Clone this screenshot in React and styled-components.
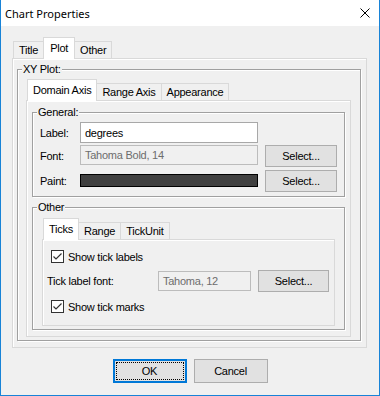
import React from "react";
import styled, { createGlobalStyle } from "styled-components";

const GlobalStyle = createGlobalStyle`
  html, body {
    margin: 0;
    padding: 0;
    background: #f0f0f0;
  }
  * {
    box-sizing: border-box;
  }
`;

const FONT = `"Liberation Sans", Arial, sans-serif`;

const Window = styled.div`
  width: 380px;
  height: 396px;
  display: flex;
  flex-direction: column;
  background: #f0f0f0;
  border: 1px solid #1883d7;
  border-top: none;
  font-family: ${FONT};
  font-size: 11px;
  letter-spacing: -0.25px;
  color: #000;
`;

const TitleBar = styled.div`
  height: 26px;
  flex: none;
  display: flex;
  align-items: center;
  justify-content: space-between;
  padding: 0 9px 0 4px;
  background: #fff;
`;

const Caption = styled.span`
  font-family: "Noto Sans", "Open Sans", sans-serif;
  font-size: 11px;
  letter-spacing: 0;
  color: #000;
`;

const Body = styled.div`
  flex: 1;
  display: flex;
  flex-direction: column;
  padding: 11px 12px 0 11px;
`;

const TabStrip = styled.div`
  display: flex;
  align-items: flex-end;
  height: 21px;
  padding-left: 1px;
  flex: none;
`;

const Tab = styled.div`
  display: flex;
  align-items: center;
  justify-content: center;
  height: ${(p) => (p.$active ? "22px" : "17px")};
  margin-bottom: ${(p) => (p.$active ? "-1px" : "0")};
  padding: 0 ${(p) => p.$pad || 5}px ${(p) => (p.$active ? "2px" : "0")};
  margin-left: -1px;
  background: ${(p) => (p.$active ? "#fff" : "#f0f0f0")};
  border: 1px solid #d9d9d9;
  border-bottom: none;
  position: relative;
  z-index: ${(p) => (p.$active ? 2 : 1)};
  white-space: nowrap;
  &:first-child {
    margin-left: 0;
  }
`;

const TabPanel = styled.div`
  display: flex;
  flex-direction: column;
  height: ${(p) => p.$h || "auto"};
  flex: ${(p) => (p.$h ? "none" : "1")};
  padding: ${(p) => p.$pad};
  border: 1px solid #d9d9d9;
  box-shadow: inset 1px 1px 0 #fff;
  background: #f0f0f0;
`;

const Group = styled.div`
  position: relative;
  display: flex;
  flex-direction: column;
  flex: ${(p) => (p.$grow ? "1" : "none")};
  height: ${(p) => p.$h || "auto"};
  margin-bottom: ${(p) => p.$mb || "0"};
  padding: ${(p) => p.$pad};
  border: 1px solid #a0a0a0;
  box-shadow: inset 1px 1px 0 #fff, 1px 1px 0 #fff;
`;

const GroupTitle = styled.span`
  position: absolute;
  top: -7px;
  left: 4px;
  padding: 0 1px;
  line-height: 13px;
  background: #f0f0f0;
`;

const FieldGrid = styled.div`
  display: grid;
  grid-template-columns: 33px 178px 72px;
  grid-template-rows: 21px 22px 22px;
  column-gap: 7px;
  row-gap: 2px;
  align-items: start;
  & > :nth-child(n + 7) {
    margin-top: 1px;
  }
`;

const Label = styled.span`
  align-self: center;
  white-space: nowrap;
`;

const TextField = styled.div`
  display: flex;
  align-items: center;
  height: ${(p) => p.$h || 20}px;
  width: ${(p) => (p.$w ? `${p.$w}px` : "auto")};
  padding: 0 4px;
  background: ${(p) => (p.$disabled ? "#f0f0f0" : "#fff")};
  color: ${(p) => (p.$disabled ? "#6d6d6d" : "#000")};
  border: 1px solid ${(p) => (p.$disabled ? "#bcbcbc" : "#a8a8a8")};
  white-space: nowrap;
  overflow: hidden;
`;

const ColorBar = styled.div`
  align-self: center;
  height: 13px;
  background: #404040;
  border: 1px solid #000;
`;

const Button = styled.button`
  height: ${(p) => p.$h || 22}px;
  width: ${(p) => p.$w}px;
  padding: 0;
  font-family: ${FONT};
  font-size: 11px;
  letter-spacing: -0.25px;
  color: #000;
  background: #e1e1e1;
  border: 1px solid ${(p) => (p.$default ? "#0078d7" : "#adadad")};
  box-shadow: ${(p) => (p.$default ? "inset 0 0 0 1px #0078d7" : "none")};
  outline: ${(p) => (p.$default ? "1px dotted #000" : "none")};
  outline-offset: -4px;
`;

const TickRows = styled.div`
  display: flex;
  flex-direction: column;
  padding: 8px 5px 0 4px;
  gap: 5px;
`;

const CheckRow = styled.label`
  display: flex;
  align-items: center;
  gap: 4px;
  height: 17px;
  padding-left: 4px;
`;

const CheckBox = styled.span`
  width: 13px;
  height: 13px;
  flex: none;
  display: flex;
  background: #fff;
  border: 1px solid #333;
`;

const FontRow = styled.div`
  display: flex;
  align-items: center;
  gap: 7px;
  height: 22px;
  margin-bottom: 1px;
  & > span {
    flex: 1;
  }
`;

const ButtonRow = styled.div`
  display: flex;
  justify-content: center;
  gap: 7px;
  padding-top: 11px;
  margin-left: 1px;
`;

const Check = ({ children }) => (
  <CheckRow>
    <CheckBox>
      <svg width="11" height="11" viewBox="0 0 11 11">
        <polyline points="1.5,5.5 4,8 9.5,2.5" fill="none" stroke="#333" strokeWidth="1.2" />
      </svg>
    </CheckBox>
    {children}
  </CheckRow>
);

const CloseIcon = () => (
  <svg width="10" height="10" viewBox="0 0 10 10">
    <path d="M0.5 0.5 L9.5 9.5 M9.5 0.5 L0.5 9.5" stroke="#000" strokeWidth="1" />
  </svg>
);

export default function App() {
  return (
    <>
      <GlobalStyle />
      <Window>
        <TitleBar>
          <Caption>Chart Properties</Caption>
          <CloseIcon />
        </TitleBar>
        <Body>
          <TabStrip>
            <Tab>Title</Tab>
            <Tab $active $pad={6}>Plot</Tab>
            <Tab>Other</Tab>
          </TabStrip>
          <TabPanel $h="290px" $pad="10px 5px 6px 4px">
            <Group $grow $pad="9px 9px 3px 8px">
              <GroupTitle>XY Plot:</GroupTitle>
              <TabStrip>
                <Tab $active>Domain Axis</Tab>
                <Tab>Range Axis</Tab>
                <Tab>Appearance</Tab>
              </TabStrip>
              <TabPanel $pad="11px 5px 6px 5px">
                <Group $h="85px" $mb="10px" $pad="9px 7px 0 7px">
                  <GroupTitle>General:</GroupTitle>
                  <FieldGrid>
                    <Label>Label:</Label>
                    <TextField $h={21}>degrees</TextField>
                    <span />
                    <Label>Font:</Label>
                    <TextField $disabled>Tahoma Bold, 14</TextField>
                    <Button $w={72}>Select...</Button>
                    <Label>Paint:</Label>
                    <ColorBar />
                    <Button $w={72}>Select...</Button>
                  </FieldGrid>
                </Group>
                <Group $grow $pad="10px 9px 3px 9px">
                  <GroupTitle>Other</GroupTitle>
                  <TabStrip>
                    <Tab $active>Ticks</Tab>
                    <Tab>Range</Tab>
                    <Tab>TickUnit</Tab>
                  </TabStrip>
                  <TabPanel>
                    <TickRows>
                      <Check>Show tick labels</Check>
                      <FontRow>
                        <span>Tick label font:</span>
                        <TextField $disabled $w={93}>Tahoma, 12</TextField>
                        <Button $w={71}>Select...</Button>
                      </FontRow>
                      <Check>Show tick marks</Check>
                    </TickRows>
                  </TabPanel>
                </Group>
              </TabPanel>
            </Group>
          </TabPanel>
          <ButtonRow>
            <Button $default $w={74} $h={24}>OK</Button>
            <Button $w={74} $h={24}>Cancel</Button>
          </ButtonRow>
        </Body>
      </Window>
    </>
  );
}
